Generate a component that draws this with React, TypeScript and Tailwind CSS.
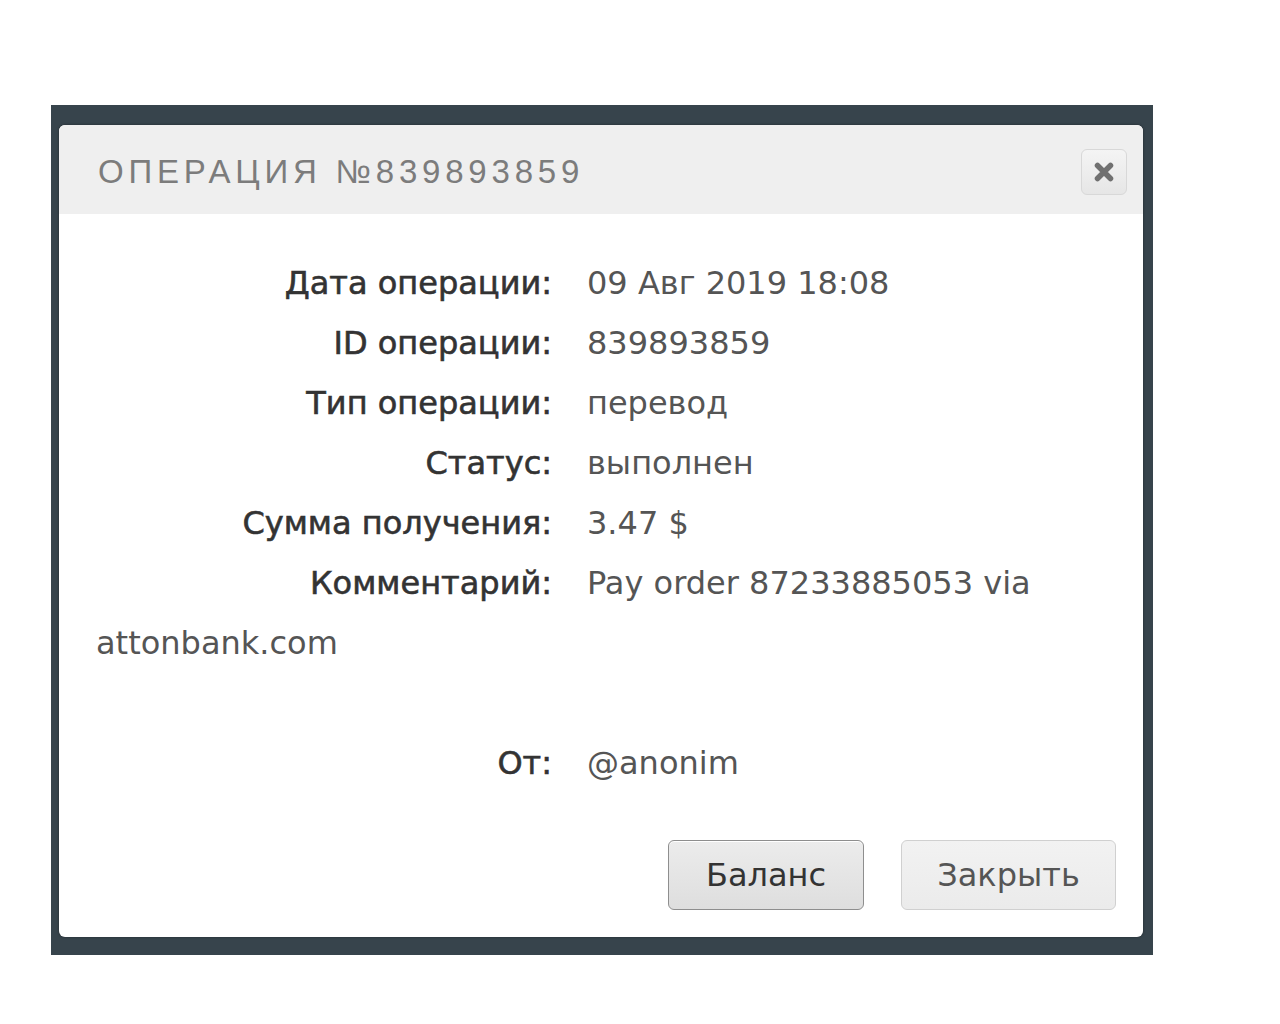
import React from "react";

const rows = [
  { label: "Дата операции:", value: "09 Авг 2019 18:08" },
  { label: "ID операции:", value: "839893859" },
  { label: "Тип операции:", value: "перевод" },
  { label: "Статус:", value: "выполнен" },
  { label: "Сумма получения:", value: "3.47 $" },
];

function Label({ children }: { children: React.ReactNode }) {
  return (
    <span className="inline-block w-[456px] pr-[35px] box-content text-right text-[#333] [-webkit-text-stroke:0.6px_#333]">
      {children}
    </span>
  );
}

export default function App() {
  return (
    <div className="min-h-[1024px] bg-white pt-[105px] pl-[51px]">
      <div className="w-[1102px] h-[850px] bg-[#37444c] pt-[20px] pl-[8px]">
        <div className="w-[1084px] h-[812px] bg-white rounded-[6px] overflow-hidden shadow-[0_0_3px_rgba(0,0,0,0.4)] flex flex-col">
          {/* header */}
          <div className="h-[89px] bg-[#efefef] flex items-center justify-between pl-[39px] pr-[16px]">
            <h2 className="font-['Liberation_Sans',sans-serif] text-[33px] tracking-[4.8px] text-[#7c7c7c] leading-none mt-[3px]">
              ОПЕРАЦИЯ №839893859
            </h2>
            <button className="w-[46px] h-[46px] mt-[4px] rounded-[6px] border border-[#d8d8d8] bg-gradient-to-b from-[#f4f4f4] to-[#e6e6e6] flex items-center justify-center">
              <svg width="22" height="22" viewBox="0 0 22 22">
                <path d="M4.5 4.5 L17.5 17.5 M17.5 4.5 L4.5 17.5" stroke="#707070" strokeWidth="5.5" strokeLinecap="round" />
              </svg>
            </button>
          </div>

          {/* body */}
          <div className="flex-1 px-[37px] pt-[39px] font-['DejaVu_Sans',sans-serif] text-[32px] leading-[60px] text-[#555]">
            {rows.map((r) => (
              <div key={r.label} className="whitespace-nowrap">
                <Label>{r.label}</Label>
                <span>{r.value}</span>
              </div>
            ))}
            <div>
              <Label>Комментарий:</Label>
              <span>
                Pay order 87233885053 via
                <br />
                attonbank.com
              </span>
            </div>
            <div className="h-[60px]" />
            <div className="whitespace-nowrap">
              <Label>От:</Label>
              <span>@anonim</span>
            </div>

            <div className="flex justify-end gap-[37px] mt-[47px]">
              <button className="w-[196px] h-[70px] rounded-[6px] border border-[#8e8e8e] bg-gradient-to-b from-[#ececec] to-[#dedede] text-[32px] text-[#333] shadow-[inset_0_1px_0_#fff]">
                Баланс
              </button>
              <button className="w-[215px] h-[70px] rounded-[6px] border border-[#d0d0d0] bg-gradient-to-b from-[#f2f2f2] to-[#ebebeb] text-[32px] text-[#555] mr-[-10px]">
                Закрыть
              </button>
            </div>
          </div>
        </div>
      </div>
    </div>
  );
}
